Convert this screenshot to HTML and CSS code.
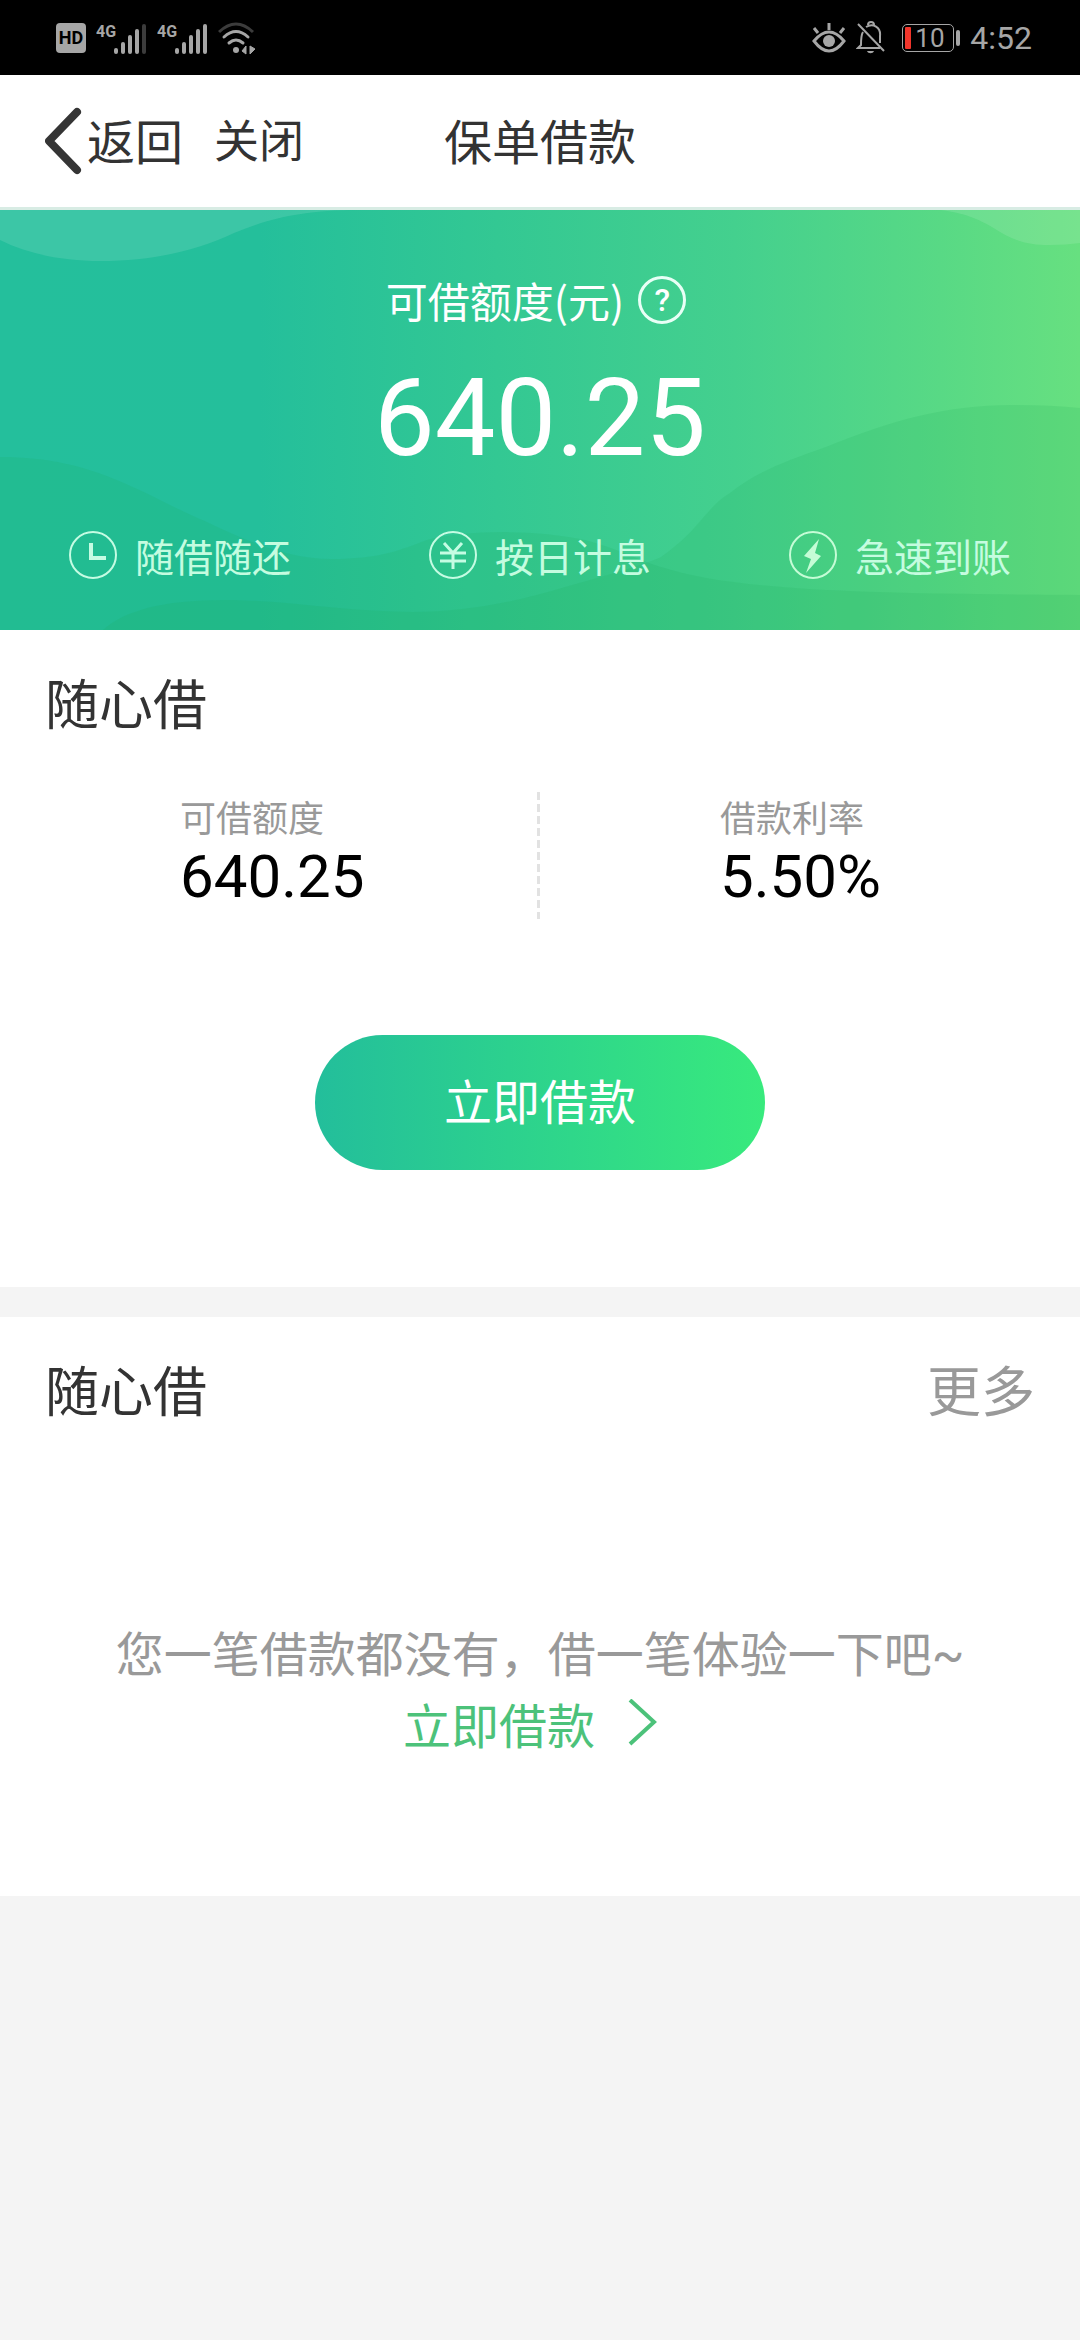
FILE: index.html
```html
<!DOCTYPE html>
<html lang="zh-CN">
<head>
<meta charset="utf-8">
<meta name="viewport" content="width=device-width, initial-scale=1">
<title>保单借款</title>
<link rel="stylesheet" href="styles.css">
</head>
<body>
<div class="status">
  <div class="status-left">
    <span class="hd">HD</span>
    <svg class="signal" width="51" height="34" viewBox="0 0 51 34" aria-hidden="true">
      <text x="0" y="16">4G</text>
      <rect x="18" y="27" width="4" height="6" rx="2"/><rect x="25" y="21" width="4" height="12" rx="2"/><rect x="32" y="14" width="4" height="19" rx="2"/><rect x="39" y="8" width="4" height="25" rx="2"/><rect class="dim" x="46" y="3" width="4" height="30" rx="2"/>
    </svg>
    <svg class="signal" width="51" height="34" viewBox="0 0 51 34" aria-hidden="true">
      <text x="0" y="16">4G</text>
      <rect x="18" y="27" width="4" height="6" rx="2"/><rect x="25" y="21" width="4" height="12" rx="2"/><rect x="32" y="14" width="4" height="19" rx="2"/><rect x="39" y="8" width="4" height="25" rx="2"/><rect x="46" y="3" width="4" height="30" rx="2"/>
    </svg>
    <svg width="38" height="34" viewBox="0 0 38 34" fill="none" stroke="#a6a6a6" stroke-width="3" aria-hidden="true">
      <path d="M1 11Q18 -5 35 11" stroke="#3c3c3c"/>
      <path d="M6 16Q18 5 30 16M11 22Q18 16 25 22" stroke-linecap="round"/>
      <circle cx="18" cy="29" r="3" fill="#a6a6a6" stroke="none"/>
      <path d="M28 25V33L24 30ZM32 25V33L37 28Z" fill="#a6a6a6" stroke-width="1"/>
    </svg>
  </div>
  <div class="status-right">
    <svg width="34" height="34" viewBox="0 0 34 34" fill="none" stroke="#a6a6a6" stroke-width="3" aria-hidden="true">
      <path d="M2 20Q17 2 32 20Q17 40 2 20ZM17 2V9M2 7L6 12M32 7L28 12"/>
      <circle cx="17" cy="20" r="6" fill="#a6a6a6" stroke="none"/>
    </svg>
    <svg width="30" height="34" viewBox="0 0 30 34" fill="none" stroke="#a6a6a6" stroke-width="2" aria-hidden="true">
      <path d="M7 11C5 14 5 18 5 24L2 27H24M10 6C17 2 25 6 24 15V22M2 3L28 30M12 4a3 3 0 0 1 6 0"/>
      <path d="M11 30h7c-1 3-6 3-7 0z" fill="#a6a6a6" stroke="none"/>
    </svg>
    <span class="battery"><span class="battery-case">10</span></span>
    <span class="clock">4:52</span>
  </div>
</div>

<header class="nav">
  <div class="nav-actions">
    <button class="nav-button nav-back" type="button">
      <svg width="42" height="72" viewBox="0 0 42 72" fill="none" stroke="#353535" stroke-width="8" stroke-linecap="round" stroke-linejoin="round" aria-hidden="true"><path d="M32 9L4 38L32 67"/></svg>返回
    </button>
    <button class="nav-button" type="button">关闭</button>
  </div>
  <h1 class="nav-title">保单借款</h1>
</header>

<main>
  <section class="hero">
    <svg class="waves" viewBox="0 0 1080 420" preserveAspectRatio="none" aria-hidden="true">
      <g fill="#fff" fill-opacity=".11">
        <path d="M0 0V30C30 45 65 51 100 51C155 51 198 40 234 23C270 8 305 0 358 0Z"/>
        <path d="M940 0C965 3 978 9 992 17C1012 30 1026 35 1050 35Q1066 35 1080 33V0Z"/>
      </g>
      <g fill="#19aa55" fill-opacity=".14">
        <path d="M0 247C48 247 85 256 124 273C160 289 178 300 207 312C250 333 290 349 331 349C380 349 400 340 427 330C465 320 535 319 585 330C620 339 635 349 661 357C735 380 850 384 1080 385V420H0Z"/>
        <path d="M103 420C125 400 165 389 234 390C300 392 350 402 413 402C465 402 520 391 565 377C600 367 638 357 661 347C700 320 706 297 730 283C755 263 785 251 826 237C890 211 945 195 1012 195Q1050 195 1080 198V420Z"/>
      </g>
    </svg>
    <div class="hero-body">
      <p class="hero-label">可借额度(元)
        <button class="help" type="button" aria-label="额度说明">?</button>
      </p>
      <p class="hero-amount">640.25</p>
      <ul class="features">
        <li>
          <svg width="48" height="48" viewBox="0 0 48 48" fill="none" stroke="#c5fce3" stroke-width="2" aria-hidden="true"><circle cx="24" cy="24" r="23"/><path d="M22 12V27H37" stroke-width="4"/></svg>随借随还
        </li>
        <li>
          <svg width="48" height="48" viewBox="0 0 48 48" fill="none" stroke="#c5fce3" stroke-width="2" aria-hidden="true"><circle cx="24" cy="24" r="23"/><path d="M15 12L24 22L33 12M11 22H37M11 30H37M24 22V38" stroke-width="3"/></svg>按日计息
        </li>
        <li>
          <svg width="48" height="48" viewBox="0 0 48 48" fill="none" stroke="#c5fcd6" stroke-width="2" aria-hidden="true"><circle cx="24" cy="24" r="23"/><path d="M30 8L15 25L22 28L17 42L32 25L26 22Z" fill="#c5fcd6" stroke="none"/></svg>急速到账
        </li>
      </ul>
    </div>
  </section>

  <section class="card">
    <div class="card-head"><h2>随心借</h2></div>
    <dl class="stats">
      <div class="stat"><dt>可借额度</dt><dd>640.25</dd></div>
      <div class="stat"><dt>借款利率</dt><dd>5.50%</dd></div>
    </dl>
    <div class="card-action">
      <button class="primary" type="button">立即借款</button>
    </div>
  </section>

  <section class="card">
    <div class="card-head"><h2>随心借</h2><a class="more" href="#">更多</a></div>
    <div class="empty">
      <p>您一笔借款都没有，借一笔体验一下吧<span class="tilde">~</span></p>
      <a class="borrow" href="#">立即借款
        <svg width="54" height="48" viewBox="0 0 54 48" fill="none" stroke="#4cc27a" stroke-width="4" aria-hidden="true"><path d="M7 1L31 23L7 45"/></svg>
      </a>
    </div>
  </section>
</main>
</body>
</html>
```
FILE: styles.css
```css
* {
  box-sizing: border-box;
  margin: 0;
  padding: 0;
}

body {
  min-height: 100vh;
  background: #f4f4f4;
  color: #333;
  font-family: "Noto Sans CJK SC", sans-serif;
  font-size: 48px;
}

svg {
  display: block;
  flex: none;
}

button {
  border: 0;
  background: none;
  color: inherit;
  font: inherit;
}

a {
  color: inherit;
  text-decoration: none;
}

h1,
h2 {
  font-weight: 400;
}

/* Status bar */
.status {
  display: flex;
  align-items: center;
  justify-content: space-between;
  height: 75px;
  padding: 0 48px 0 56px;
  background: #000;
  color: #a6a6a6;
  font-family: Roboto, sans-serif;
}

.status-left,
.status-right {
  display: flex;
  align-items: center;
  gap: 10px;
}

.hd {
  width: 30px;
  border-radius: 4px;
  background: #a6a6a6;
  color: #000;
  font-size: 18px;
  font-weight: 700;
  line-height: 30px;
  text-align: center;
}

.signal {
  fill: #a6a6a6;
  font-size: 16px;
  font-weight: 700;
}

.signal .dim {
  fill: #3c3c3c;
}

.battery {
  display: flex;
  align-items: center;
  gap: 2px;
  margin-left: 6px;
}

.battery::after {
  width: 4px;
  height: 16px;
  border-radius: 2px;
  background: #a6a6a6;
  content: "";
}

.battery-case {
  display: flex;
  align-items: center;
  gap: 4px;
  width: 52px;
  height: 28px;
  padding: 0 2px;
  border: 1px solid #a6a6a6;
  border-radius: 5px;
  font-size: 26px;
  line-height: 24px;
}

.battery-case::before {
  width: 6px;
  height: 22px;
  border-radius: 1px;
  background: #f0352b;
  content: "";
}

.clock {
  font-size: 32px;
  line-height: 40px;
}

/* Navigation bar */
.nav {
  display: grid;
  grid-template-columns: 1fr auto 1fr;
  align-items: center;
  height: 132px;
  padding: 0 45px 4px;
  background: #fff;
}

.nav-actions {
  display: flex;
  align-items: center;
  gap: 31px;
}

.nav-button {
  display: flex;
  align-items: center;
  font-size: 45px;
  line-height: 72px;
}

.nav-back,
.nav-title {
  font-size: 48px;
  line-height: 72px;
}

/* Credit banner */
.hero {
  position: relative;
  border-top: 3px solid #d8ece4;
  background: linear-gradient(90deg, #24bf9c 0%, #24bf9b 24%, #33c893 46%, #44d08e 68%, #58d985 87%, #67e080 100%);
  color: #fff;
}

.waves {
  position: absolute;
  inset: 0;
  width: 100%;
  height: 100%;
}

.hero-body {
  position: relative;
  padding: 60px 0 45px;
}

.hero-label {
  display: flex;
  align-items: center;
  justify-content: center;
  gap: 14px;
  padding-right: 8px;
  font-size: 42px;
  line-height: 60px;
}

.help {
  width: 48px;
  height: 48px;
  border: 3px solid #e8fff6;
  border-radius: 50%;
  font-family: Roboto, sans-serif;
  font-size: 32px;
  font-weight: 500;
  line-height: 42px;
}

.hero-amount {
  margin: 24px 0 43px;
  font-family: Roboto, sans-serif;
  font-size: 108px;
  line-height: 128px;
  text-align: center;
}

.features {
  display: grid;
  grid-template-columns: repeat(3, 1fr);
  color: #c5fce0;
  font-size: 39px;
  line-height: 60px;
  list-style: none;
}

.features li {
  display: flex;
  align-items: center;
  justify-content: center;
  gap: 18px;
}

/* Content cards */
.card {
  background: #fff;
}

.card + .card {
  margin-top: 30px;
}

.card-head {
  display: flex;
  justify-content: space-between;
  padding: 0 45px;
  font-size: 54px;
  line-height: 144px;
}

.card-head h2 {
  font-size: 54px;
}

.more {
  color: #999;
}

.stats {
  display: grid;
  grid-template-columns: 1fr 1fr;
  padding-top: 18px;
  background: repeating-linear-gradient(180deg, #e2e2e2 0 8px, transparent 8px 12px) calc(50% - 2px) 18px / 3px 127px no-repeat;
}

.stat {
  padding: 0 0 5px 180px;
}

.stat dt {
  color: #999;
  font-size: 36px;
  line-height: 48px;
}

.stat dd {
  color: #000;
  font-family: Roboto, sans-serif;
  font-size: 60px;
  line-height: 74px;
}

.card-action {
  display: flex;
  justify-content: center;
  padding: 116px 0 117px;
}

.primary {
  width: 450px;
  padding-bottom: 7px;
  border-radius: 68px;
  background: linear-gradient(90deg, #23be9b, #38ea7d);
  color: #fff;
  font-size: 48px;
  line-height: 128px;
}

.empty {
  padding: 154px 45px 137px;
  color: #999;
  line-height: 72px;
  text-align: center;
}

.tilde {
  font-family: Roboto, sans-serif;
  line-height: 1;
}

.borrow {
  display: flex;
  align-items: center;
  justify-content: center;
  gap: 28px;
  color: #4cc27a;
}
```
